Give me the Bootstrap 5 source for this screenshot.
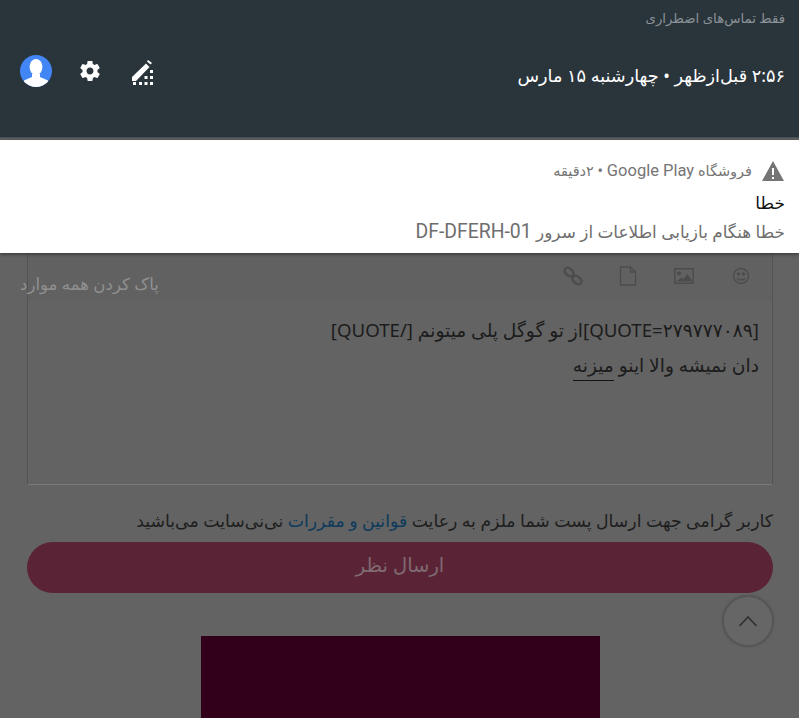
<!DOCTYPE html>
<html lang="fa" dir="rtl">
<head>
  <meta charset="UTF-8" />
  <meta name="viewport" content="width=device-width, initial-scale=1.0" />
  <title>اعلان خطا</title>
  <link href="https://cdn.jsdelivr.net/npm/bootstrap@5.3.2/dist/css/bootstrap.min.css" rel="stylesheet">
  <style>
    html, body { height: 718px; overflow: hidden; }
    body { background: #636363; font-family: "Noto Sans", "DejaVu Sans", sans-serif; color: #1c1c1c; position: relative; }
    .shade-head { height: 138px; background: #2a343b; border-bottom: 1px solid #46515a; padding: 8px 14px 0 20px; }
    .carrier-text { font-size: 13.3px; line-height: 20px; color: #8b9297; }
    .clock-text { font-size: 17.700px; line-height: 26px; color: #fff; margin-top: 34px; }
    .quick-icons { margin-top: 27px; }
    .quick-gear { margin-left: 26px; }
    .quick-pen { margin-left: 29px; }
    .notif-card { margin-top: 2px; height: 113px; background: #fff; padding: 19px 14px 0 14px; box-shadow: 0 1px 4px rgba(0,0,0,.5); position: relative; }
    .notif-meta { font-size: 14.500px; line-height: 22px; color: #757575; gap: 9px; }
    .roboto-run { font-family: Roboto, sans-serif; }
    .notif-meta .roboto-run { font-size: 16.500px; }
    .notif-title { font-size: 17px; line-height: 26px; color: #111; margin-top: 8px; }
    .notif-body { font-size: 16.900px; line-height: 28px; color: #6e6e6e; margin-top: 2px; }
    .notif-body .roboto-run { font-size: 19.400px; }
    .forum-area { padding: 0 26px 0 27px; }
    .editor-box { height: 232px; border: 1px solid #525252; border-top: 0; border-bottom-color: #7a7a7a; }
    .editor-tools { height: 48px; padding: 13px 21px 0 0; gap: 36px; background: #616161; }
    .clear-all { font-size: 16.600px; color: #909090; margin-right: auto; margin-left: -8px; margin-top: 6px; }
    .editor-text { padding: 11px 13px 0 0; font-size: 18.650px; line-height: 35px; color: #1c1c1c; }
    .word-mark { border-bottom: 1px solid #141414; padding-bottom: 3px; }
    .rules-line { font-size: 17.300px; line-height: 28px; margin-top: 22px; color: #1e1e1e; }
    .rules-line a { color: #0d3a5c; text-decoration: none; }
    .send-btn { height: 51px; margin-top: 7px; padding: 0 0 5px; background: #5b2436; border: 0; color: #7f6a72; font-size: 19.500px; }
    .dark-banner { width: 399px; height: 82px; margin: 43px 173px 0 auto; background: #32001a; }
    .to-top { position: absolute; left: 722px; top: 595px; width: 52px; height: 52px; border-radius: 50%; border: 2px solid #565656; background: #666; box-shadow: 0 0 2px #555; }
  </style>
</head>
<body>
  <div class="shade-head">
    <div class="carrier-text">فقط تماس‌های اضطراری</div>
    <div class="d-flex justify-content-between align-items-start">
      <div class="clock-text">۲:۵۶ قبل‌ازظهر • چهارشنبه ۱۵ مارس</div>
      <div class="quick-icons d-flex align-items-center" dir="ltr">
        <svg width="32" height="32" viewBox="0 0 32 32"><circle cx="16" cy="16" r="16" fill="#4285f4"/><clipPath id="av"><circle cx="16" cy="16" r="16"/></clipPath><g clip-path="url(#av)" fill="#fff"><ellipse cx="16" cy="12" rx="6.400" ry="8"/><path d="M12 19h8v3l8 3.500V33H4v-7.500l8-3.500z"/></g></svg>
        <svg class="quick-gear" width="24" height="24" viewBox="0 0 24 24" fill="#fff"><path d="M19.400 13c.04-.330.060-.660.060-1s-.020-.670-.060-1l2.100-1.650c.190-.150.240-.420.120-.640l-2-3.460c-.120-.220-.390-.300-.610-.220l-2.490 1c-.520-.400-1.080-.730-1.690-.980l-.380-2.650C14.460 2.180 14.250 2 14 2h-4c-.250 0-.460.180-.490.420l-.380 2.650c-.610.250-1.170.590-1.690.980l-2.490-1c-.230-.090-.490 0-.610.220l-2 3.460c-.130.220-.070.490.120.640L4.570 11c-.040.330-.070.670-.070 1s.030.670.070 1l-2.110 1.650c-.190.150-.240.420-.120.640l2 3.460c.120.220.390.300.610.220l2.490-1c.520.400 1.080.730 1.690.980l.380 2.650c.030.240.240.420.490.420h4c.250 0 .460-.180.490-.420l.380-2.650c.610-.250 1.170-.590 1.690-.980l2.490 1c.230.090.490 0 .610-.220l2-3.460c.120-.220.070-.490-.120-.640L19.400 13zM12 15.500c-1.930 0-3.500-1.570-3.500-3.500s1.570-3.500 3.500-3.500 3.500 1.570 3.500 3.500-1.570 3.500-3.500 3.500z"/></svg>
        <svg class="quick-pen" width="24" height="28" viewBox="0 0 24 28" fill="#fff"><path d="M1 20 15 6.500l3.500 3.500L5 24H1z"/><path d="M17 3l4 3-1.500 1.500L16 4.500z"/><path d="M2 25h3v3H2zM8 25h3v3H8zM13.500 25h3v3h-3zM19 25h3v3h-3zM19 19h3v3h-3zM19 13h3v3h-3zM13.500 19h3v3h-3z"/></svg>
      </div>
    </div>
  </div>

  <div class="notif-card">
    <div class="notif-meta d-flex align-items-center">
      <svg width="24" height="22" viewBox="0 0 24 22" fill="#757575"><path d="M1 21 12 1l11 20zM11 8v7h2V8zm0 9v2h2v-2z" fill-rule="evenodd"/></svg>
      <span>فروشگاه <bdi class="roboto-run">Google Play</bdi> • ۲دقیقه</span>
    </div>
    <div class="notif-title">خطا</div>
    <div class="notif-body">خطا هنگام بازیابی اطلاعات از سرور <span class="roboto-run">DF-DFERH-01</span></div>
  </div>

  <div class="forum-area">
    <div class="editor-box">
      <div class="editor-tools d-flex align-items-start">
        <svg width="20" height="20" viewBox="0 0 20 20" fill="none" stroke="#4c4c4c" stroke-width="1.300"><circle cx="10" cy="10" r="7.500"/><circle cx="7.500" cy="8" r="1" fill="#4c4c4c"/><circle cx="12.500" cy="8" r="1" fill="#4c4c4c"/><path d="M6 12c1 2.500 7 2.500 8 0"/></svg>
        <svg width="22" height="20" viewBox="0 0 22 20" fill="#4c4c4c"><path fill-rule="evenodd" d="M1 2h20v16H1zm1.500 1.500v13h17v-13zM6 5.500a2 2 0 1 1 0 4 2 2 0 0 1 0-4zM3.500 15.500l5-4 2 1.500 4-5 5 7.500z"/></svg>
        <svg width="18" height="20" viewBox="0 0 18 20" fill="none" stroke="#4c4c4c" stroke-width="1.300"><path d="M1.500 1h10l5 5v13h-15zM11.500 1v5h5"/></svg>
        <svg width="20" height="20" viewBox="0 0 20 20" fill="none" stroke="#4c4c4c" stroke-width="2.200"><rect x="1" y="2.800" width="10" height="6.400" rx="3.200" transform="rotate(42 6 6)"/><rect x="9" y="10.800" width="10" height="6.400" rx="3.200" transform="rotate(42 14 14)"/></svg>
        <div class="clear-all">پاک کردن همه موارد</div>
      </div>
      <div class="editor-text">
        <div>[QUOTE=۲۷۹۷۷۷۰۸۹]از تو گوگل پلی میتونم [/QUOTE]</div>
        <div>دان نمیشه والا اینو <span class="word-mark">میزنه</span></div>
      </div>
    </div>
    <div class="rules-line">کاربر گرامی جهت ارسال پست شما ملزم به رعایت <a href="#">قوانین و مقررات</a> نی‌نی‌سایت می‌باشید</div>
    <button class="btn w-100 rounded-pill d-block send-btn" type="button">ارسال نظر</button>
    <div class="dark-banner"></div>
  </div>

  <div class="to-top d-flex align-items-center justify-content-center">
    <svg width="20" height="12" viewBox="0 0 20 12" fill="none" stroke="#333" stroke-width="1.800"><path d="M1.500 11 10 2l8.500 9"/></svg>
  </div>
  <script src="https://cdn.jsdelivr.net/npm/bootstrap@5.3.2/dist/js/bootstrap.bundle.min.js"></script>
</body>
</html>
